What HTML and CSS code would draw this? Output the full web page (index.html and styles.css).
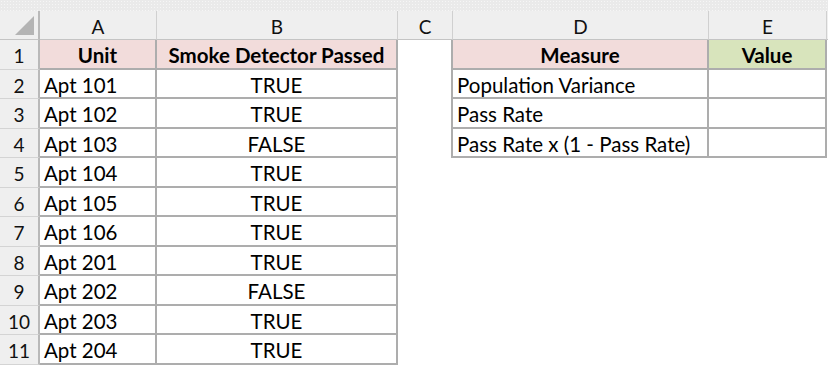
FILE: index.html
```html
<!DOCTYPE html>
<html lang="en">
<head>
<meta charset="utf-8">
<title>Smoke Detector Sheet</title>
<link rel="stylesheet" href="styles.css">
</head>
<body>
<div class="sheet">
  <div class="band"></div>

  <div class="colhead corner"><div class="tri"></div></div>
  <div class="colhead">A</div>
  <div class="colhead">B</div>
  <div class="colhead">C</div>
  <div class="colhead">D</div>
  <div class="colhead">E</div>
  <div class="colhead last"></div>

  <div class="rowhead">1</div>
  <div class="cell t hdr pink">Unit</div>
  <div class="cell t hdr pink">Smoke Detector Passed</div>
  <div class="cell edge"></div>
  <div class="cell t hdr pink">Measure</div>
  <div class="cell t hdr green">Value</div>
  <div class="cell"></div>

  <div class="rowhead">2</div>
  <div class="cell t">Apt 101</div>
  <div class="cell t ctr">TRUE</div>
  <div class="cell edge"></div>
  <div class="cell t">Population Variance</div>
  <div class="cell t"></div>
  <div class="cell"></div>

  <div class="rowhead">3</div>
  <div class="cell t">Apt 102</div>
  <div class="cell t ctr">TRUE</div>
  <div class="cell edge"></div>
  <div class="cell t">Pass Rate</div>
  <div class="cell t"></div>
  <div class="cell"></div>

  <div class="rowhead">4</div>
  <div class="cell t">Apt 103</div>
  <div class="cell t ctr">FALSE</div>
  <div class="cell edge"></div>
  <div class="cell t">Pass Rate x (1 - Pass Rate)</div>
  <div class="cell t"></div>
  <div class="cell"></div>

  <div class="rowhead">5</div>
  <div class="cell t">Apt 104</div>
  <div class="cell t ctr">TRUE</div>
  <div class="cell"></div>
  <div class="cell"></div>
  <div class="cell"></div>
  <div class="cell"></div>

  <div class="rowhead">6</div>
  <div class="cell t">Apt 105</div>
  <div class="cell t ctr">TRUE</div>
  <div class="cell"></div>
  <div class="cell"></div>
  <div class="cell"></div>
  <div class="cell"></div>

  <div class="rowhead">7</div>
  <div class="cell t">Apt 106</div>
  <div class="cell t ctr">TRUE</div>
  <div class="cell"></div>
  <div class="cell"></div>
  <div class="cell"></div>
  <div class="cell"></div>

  <div class="rowhead">8</div>
  <div class="cell t">Apt 201</div>
  <div class="cell t ctr">TRUE</div>
  <div class="cell"></div>
  <div class="cell"></div>
  <div class="cell"></div>
  <div class="cell"></div>

  <div class="rowhead">9</div>
  <div class="cell t">Apt 202</div>
  <div class="cell t ctr">FALSE</div>
  <div class="cell"></div>
  <div class="cell"></div>
  <div class="cell"></div>
  <div class="cell"></div>

  <div class="rowhead">10</div>
  <div class="cell t">Apt 203</div>
  <div class="cell t ctr">TRUE</div>
  <div class="cell"></div>
  <div class="cell"></div>
  <div class="cell"></div>
  <div class="cell"></div>

  <div class="rowhead">11</div>
  <div class="cell t">Apt 204</div>
  <div class="cell t ctr">TRUE</div>
  <div class="cell"></div>
  <div class="cell"></div>
  <div class="cell"></div>
  <div class="cell"></div>
</div>
</body>
</html>
```

FILE: styles.css
```css
html, body {
  margin: 0;
  padding: 0;
  background: #ffffff;
}

body {
  font-family: Lato, "Liberation Sans", sans-serif;
  color: #000000;
}

.sheet {
  display: grid;
  grid-template-columns: 40px 117px 241px 55px 256px 118px 1fr;
  grid-template-rows: 11px 29px repeat(11, 29.5px);
  width: 828px;
  height: 366px;
  overflow: hidden;
}

.band {
  grid-column: 1 / -1;
  background-color: #eaeaea;
  background-image: radial-gradient(circle, #f6f6f6 0.6px, transparent 0.9px);
  background-size: 3px 3px;
}

.colhead {
  background: #efefef;
  border-right: 1px solid #d0d0d0;
  border-bottom: 1px solid #c4c4c4;
  display: flex;
  align-items: center;
  justify-content: center;
  padding-top: 3px;
  font-size: 19px;
  color: #111;
}

.colhead.last {
  border-right: none;
}

.corner {
  justify-content: flex-end;
  align-items: flex-end;
  padding: 0 4px 4px 0;
  border-right: 2px solid #b9b9b9;
}

.tri {
  width: 19px;
  height: 19px;
  background: #b4b4b4;
  clip-path: polygon(100% 0, 100% 100%, 0 100%);
}

.rowhead {
  background: #efefef;
  border-right: 2px solid #b9b9b9;
  border-bottom: 1px solid #d4d4d4;
  display: flex;
  align-items: center;
  justify-content: center;
  padding-top: 3px;
  font-size: 19px;
  color: #111;
}

.cell {
  background: #ffffff;
  display: flex;
  align-items: center;
  padding-left: 4px;
  padding-top: 3px;
  font-size: 20.5px;
  white-space: nowrap;
  overflow: hidden;
}

.t {
  border-right: 2px solid #adadad;
  border-bottom: 2px solid #adadad;
}

.edge {
  border-right: 2px solid #adadad;
}

.ctr {
  justify-content: center;
  padding-left: 0;
}

.hdr {
  justify-content: center;
  padding-left: 0;
  font-weight: 700;
}

.pink {
  background: #f2dcdb;
}

.green {
  background: #d8e4bc;
}
```
